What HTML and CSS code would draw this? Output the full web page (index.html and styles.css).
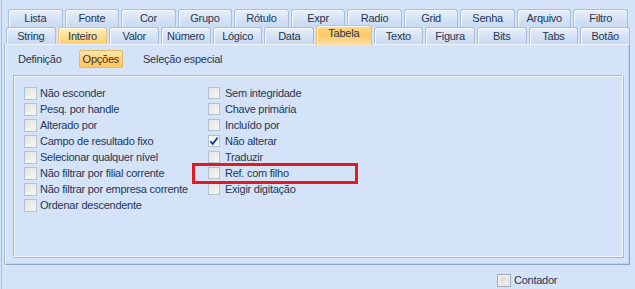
FILE: index.html
```html
<!DOCTYPE html>
<html>
<head>
<meta charset="utf-8">
<link rel="stylesheet" href="styles.css">
</head>
<body>
<div class="frame">
  <div class="tabs">
    <div class="row row1">
      <div class="tab">Lista</div>
      <div class="tab">Fonte</div>
      <div class="tab">Cor</div>
      <div class="tab">Grupo</div>
      <div class="tab">Rótulo</div>
      <div class="tab">Expr</div>
      <div class="tab">Radio</div>
      <div class="tab">Grid</div>
      <div class="tab">Senha</div>
      <div class="tab">Arquivo</div>
      <div class="tab">Filtro</div>
    </div>
    <div class="row row2">
      <div class="tab">String</div>
      <div class="tab hot">Inteiro</div>
      <div class="tab">Valor</div>
      <div class="tab">Número</div>
      <div class="tab">Lógico</div>
      <div class="tab">Data</div>
      <div class="tab active">Tabela</div>
      <div class="tab">Texto</div>
      <div class="tab">Figura</div>
      <div class="tab">Bits</div>
      <div class="tab">Tabs</div>
      <div class="tab">Botão</div>
    </div>
  </div>
  <div class="pane">
    <div class="subtabs">
      <div class="subtab">Definição</div>
      <div class="subtab sel">Opções</div>
      <div class="subtab">Seleção especial</div>
    </div>
    <div class="group">
      <div class="col col1">
        <div class="chk"><span class="box"></span>Não esconder</div>
        <div class="chk"><span class="box"></span>Pesq. por handle</div>
        <div class="chk"><span class="box"></span>Alterado por</div>
        <div class="chk"><span class="box"></span>Campo de resultado fixo</div>
        <div class="chk"><span class="box"></span>Selecionar qualquer nível</div>
        <div class="chk"><span class="box"></span>Não filtrar por filial corrente</div>
        <div class="chk"><span class="box"></span>Não filtrar por empresa corrente</div>
        <div class="chk"><span class="box"></span>Ordenar descendente</div>
      </div>
      <div class="col col2">
        <div class="chk"><span class="box"></span>Sem integridade</div>
        <div class="chk"><span class="box"></span>Chave primária</div>
        <div class="chk"><span class="box"></span>Incluído por</div>
        <div class="chk"><span class="box checked"><svg width="11" height="11" viewBox="0 0 11 11"><path d="M1.5 5.2 L4 8.2 L9.5 1.2" fill="none" stroke="#1d3c8e" stroke-width="2"/></svg></span>Não alterar</div>
        <div class="chk"><span class="box"></span>Traduzir</div>
        <div class="chk"><span class="box"></span>Ref. com filho</div>
        <div class="chk"><span class="box"></span>Exigir digitação</div>
      </div>
    </div>
  </div>
  <div class="bottom">
    <div class="chk"><span class="box small"><span class="inner"></span></span>Contador</div>
  </div>
</div>
<div class="mark"></div>
</body>
</html>
```
FILE: styles.css
```css
html, body {
  margin: 0;
  padding: 0;
}
body {
  width: 635px;
  height: 289px;
  overflow: hidden;
  background: #d4e3f8;
  font-family: "Liberation Sans", Arial, sans-serif;
  font-size: 11px;
  letter-spacing: -0.25px;
  color: #243754;
  position: relative;
}
.frame {
  margin-left: 1px;
  height: 289px;
  box-sizing: border-box;
  border-left: 1px solid #a9bdd9;
  padding: 9px 0 0 3px;
}
.tabs {
  display: flex;
  flex-direction: column;
}
.row {
  display: flex;
  gap: 2px;
}
.row1 {
  margin-left: 3px;
  width: 620px;
  height: 18px;
}
.row2 {
  margin-left: 1px;
  width: 624px;
  height: 17px;
}
.tab {
  flex: 1;
  box-sizing: border-box;
  border: 1px solid #a7bddc;
  border-bottom: none;
  border-radius: 3px 3px 0 0;
  background: linear-gradient(#e9f0fa, #d3e1f5 60%, #c9daf2);
  text-align: center;
  line-height: 17px;
  box-shadow: inset 1px 1px 0 #f6f9fe;
}
.row2 .tab {
  line-height: 16px;
}
.tab.hot {
  background: linear-gradient(#fff2c8, #ffd98c 60%, #ffcf72);
  border-color: #e6c27c;
  box-shadow: inset 1px 1px 0 #fff8e0;
}
.tab.active {
  flex: 1.12;
  margin-top: -2px;
  margin-bottom: -2px;
  position: relative;
  z-index: 2;
  line-height: 15px;
  background: linear-gradient(#fed98e, #fcc964 45%, #fddc9c 85%, #fde6b6);
  border-color: #e7bf74;
}
.pane {
  width: 625px;
  height: 221px;
  box-sizing: border-box;
  border: 1px solid #8ea4c2;
  border-top-color: #eef4fc;
  border-left-color: #eef4fc;
  box-shadow: inset -1px -1px 0 #c2d3ea, -1px 0 0 #a8bcd8;
  background: #d4e3f8;
  padding: 5px 0 0 7px;
  display: flex;
  flex-direction: column;
}
.subtabs {
  display: flex;
  height: 18px;
  align-items: center;
  gap: 7px;
  margin-left: 1px;
}
.subtab {
  padding: 0 7px 0 3px;
  line-height: 16px;
  border: 1px solid transparent;
  border-radius: 2px;
}
.subtab.sel {
  padding: 0 3px;
  line-height: 16px;
  background: linear-gradient(#ffe9ad, #ffd27e 50%, #ffc65e);
  border-color: #e4b865;
  color: #4a3010;
  margin-left: 2px;
  margin-right: 9px;
}
.group {
  margin-top: 7px;
  width: 610px;
  height: 182px;
  box-sizing: border-box;
  border: 1px solid #a6b9d5;
  border-right-color: #f2f6fd;
  border-bottom-color: #f2f6fd;
  box-shadow: inset 1px 1px 0 #eef4fc, 1px 1px 0 #a6b9d5;
  display: flex;
  padding: 9px 0 0 10px;
}
.col {
  display: flex;
  flex-direction: column;
}
.col1 {
  width: 184px;
}
.chk {
  display: flex;
  align-items: center;
  height: 16px;
  white-space: nowrap;
}
.box {
  width: 13px;
  height: 13px;
  box-sizing: border-box;
  border: 1px solid #b4c1d3;
  background: linear-gradient(135deg, #e4e4e0, #f6f6f3);
  margin-right: 3px;
  display: flex;
  align-items: center;
  justify-content: center;
}
.col2 .box {
  width: 12px;
  height: 12px;
  margin-right: 5px;
}
.box.checked {
  background: #f4f6f9;
}
.box.checked svg {
  display: block;
}
.bottom {
  display: flex;
  padding: 7px 0 0 492px;
}
.box.small {
  width: 14px;
  height: 13px;
  border-color: #a0abbb;
  background: #eef1f3;
  margin-right: 3px;
}
.box .inner {
  width: 7px;
  height: 7px;
  background: linear-gradient(135deg, #d8dcd6, #f1f3ee);
  border: 1px solid #e3e6e2;
}
.mark {
  position: absolute;
  left: 192px;
  top: 163px;
  width: 166px;
  height: 21px;
  box-sizing: border-box;
  border: 3px solid #e21a22;
}
```
